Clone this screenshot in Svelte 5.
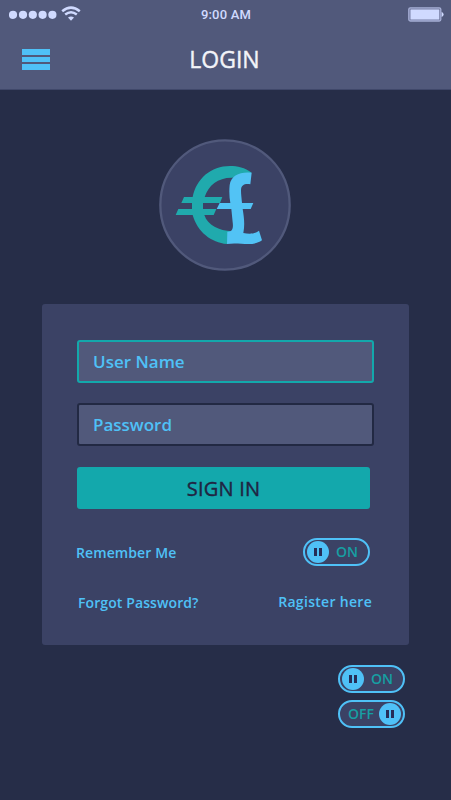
<script>
  let username = '';
  let password = '';
  let remember = true;
  let first = true;
  let second = false;
</script>

{#snippet toggle(on, flip)}
  <button class="toggle" class:off={!on} aria-pressed={on} on:click={flip}>
    <span class="knob"><i></i><i></i></span>
    <span class="state">{on ? 'ON' : 'OFF'}</span>
  </button>
{/snippet}

<div class="screen">
  <header>
    <div class="status">
      <div class="signal">
        <svg class="dots" width="48" height="10" viewBox="0 0 48 10">
          {#each [4, 14, 23.8, 33.6, 43.4] as x}
            <circle cx={x} cy="4.8" r="4.1" />
          {/each}
        </svg>
        <svg class="wifi" width="20" height="15" viewBox="0 0 20 15">
          <path d="M1.2 5.2Q10 -2 18.8 5.2M4.2 8.6Q10 4 15.8 8.6" />
          <path class="tip" d="M7 11.6Q10 9.4 13 11.6L10 14.7Z" />
        </svg>
      </div>
      <span class="time">9:00 AM</span>
      <svg class="battery" width="36" height="15" viewBox="0 0 36 15">
        <rect class="case" x="0.8" y="0.8" width="32" height="13.2" rx="1.5" />
        <rect class="charge" x="2.5" y="2.4" width="28.7" height="10" rx="0.5" />
        <path class="charge" d="M33.6 4.8Q35.6 5.8 35.6 7.4Q35.6 9 33.6 10Z" />
      </svg>
    </div>
    <div class="title-bar">
      <button class="menu" aria-label="Menu"><i></i><i></i><i></i></button>
      <h1>LOGIN</h1>
    </div>
  </header>

  <svg class="logo" width="132" height="132" viewBox="27 27 396 396">
    <circle class="disc" cx="225" cy="225" r="194" />
    <path class="euro" d="M305 128C285 113 262 108 240 108C183 108 139 146 128 201H102L94 219H126V237H85L77 255H128C142 306 184 338 231 342L246 304C207 302 173 286 163 255H191L199 237H159V219H210L217 201H164C175 166 204 143 244 143L273 142Z" />
    <path class="pound" d="M305 128L301 163C287 160 273 163 273 181C273 194 275 206 276 219H310L302 237H278C282 261 285 283 280 309C296 312 314 313 327 302L336 331C307 352 268 335 231 342L232 305C249 306 250 291 248 277L244 237H200L209 219H241C238 202 237 183 239 165C243 135 272 124 305 128Z" />
  </svg>

  <form class="card" on:submit|preventDefault>
    <input class="active" type="text" placeholder="User Name" bind:value={username} />
    <input type="password" placeholder="Password" bind:value={password} />
    <button class="sign-in" type="submit">SIGN IN</button>
    <div class="row remember">
      <span>Remember Me</span>
      {@render toggle(remember, () => (remember = !remember))}
    </div>
    <div class="row links">
      <span>Forgot Password?</span>
      <span class="register">Ragister here</span>
    </div>
  </form>

  <div class="toggles">
    {@render toggle(first, () => (first = !first))}
    {@render toggle(second, () => (second = !second))}
  </div>
</div>

<style>
  :global(body) {
    background: #262d48;
  }

  .screen {
    box-sizing: border-box;
    width: 451px;
    height: 800px;
    overflow: hidden;
    background: #262d48;
    color: #4fc1f7;
    font-family: 'Open Sans', 'Noto Sans', sans-serif;
  }

  button,
  input {
    box-sizing: border-box;
    margin: 0;
    font-family: inherit;
  }

  button {
    padding: 0;
    cursor: pointer;
  }

  header {
    box-sizing: border-box;
    height: 90px;
    background: #51597b;
    border-bottom: 1px solid #40486a;
  }

  .status {
    display: grid;
    grid-template-columns: 1fr auto 1fr;
    align-items: center;
    height: 29px;
    padding: 0 7px 0 9px;
  }

  .signal {
    display: flex;
    align-items: center;
    gap: 4px;
  }

  .dots,
  .tip,
  .charge {
    fill: #d0daff;
  }

  .wifi {
    margin: -1px 0 1px;
    fill: none;
    stroke: #d0daff;
    stroke-width: 2.5;
  }

  .wifi .tip {
    fill: #d0daff;
    stroke: none;
  }

  .time {
    margin-right: 1px;
    color: #d0daff;
    font: 500 13px/29px Roboto, sans-serif;
    letter-spacing: 0.2px;
  }

  .battery {
    justify-self: end;
  }

  .case {
    fill: #777fa5;
    stroke: #a5aed5;
    stroke-width: 1.3;
  }

  .title-bar {
    display: grid;
    grid-template-columns: 28px 1fr 28px;
    align-items: center;
    height: 61px;
    padding: 0 24px 0 22px;
  }

  .menu {
    display: flex;
    flex-direction: column;
    gap: 2px;
    border: none;
    background: none;
  }

  .menu i {
    width: 28px;
    height: 5.6px;
    background: #4fc1f7;
  }

  h1 {
    margin: 0;
    color: #f2f3f8;
    font-size: 23px;
    font-weight: 500;
    line-height: 61px;
    text-align: center;
    -webkit-text-stroke: 0.4px;
  }

  .logo {
    display: block;
    margin: 49px 0 0 159px;
  }

  .disc {
    fill: #3b4265;
    stroke: #51597b;
    stroke-width: 7;
  }

  .euro {
    fill: #20aaad;
  }

  .pound {
    fill: #52c3f5;
  }

  .card {
    box-sizing: border-box;
    width: 367px;
    height: 341px;
    margin: 32.5px 0 0 42px;
    padding: 36.5px 35px 0;
    border-radius: 3px;
    background: #3b4265;
  }

  input {
    display: block;
    width: 297px;
    height: 43px;
    margin-bottom: 20px;
    padding: 0 14px;
    border: 2px solid #222943;
    border-radius: 3px;
    outline: none;
    background: #51597b;
    color: #4fc1f7;
    font-size: 17px;
    font-weight: 600;
  }

  input::placeholder {
    color: #4fc1f7;
    opacity: 1;
  }

  input.active {
    border-color: #13a8ab;
  }

  .sign-in {
    display: block;
    width: 293px;
    height: 42px;
    margin-top: 21px;
    border: none;
    border-radius: 3px;
    background: #13a8ac;
    color: #202442;
    font-size: 20px;
    font-weight: 500;
    letter-spacing: 0.2px;
    -webkit-text-stroke: 0.4px;
  }

  .row {
    display: flex;
    justify-content: space-between;
    align-items: center;
    font-size: 14px;
    font-weight: 600;
    line-height: 20px;
    letter-spacing: 0.1px;
  }

  .remember {
    margin: 29px 4px 0 -1px;
  }

  .remember > span {
    padding-top: 1px;
  }

  .links {
    margin: 27px 2px 0 1px;
  }

  .register {
    margin-top: -2px;
    letter-spacing: 0.3px;
  }

  .toggle {
    display: flex;
    align-items: center;
    box-sizing: border-box;
    width: 67px;
    height: 28px;
    padding: 0 3px 0 2px;
    border: 2px solid #4fc1f7;
    border-radius: 14px;
    background: #3b4265;
    color: #169fa3;
  }

  .toggle.off {
    flex-direction: row-reverse;
    padding: 0 2px 0 3px;
  }

  .knob {
    display: flex;
    justify-content: center;
    align-items: center;
    gap: 2px;
    flex: none;
    width: 22px;
    height: 22px;
    border-radius: 50%;
    background: #4fc1f7;
  }

  .knob i {
    width: 3px;
    height: 8px;
    background: #262d58;
  }

  .state {
    flex: 1;
    font-size: 14px;
    font-weight: 600;
    line-height: 20px;
    letter-spacing: 0;
    text-align: center;
  }

  .toggles {
    display: flex;
    flex-direction: column;
    gap: 7px;
    width: 67px;
    margin: 20.5px 0 0 338px;
  }
</style>
